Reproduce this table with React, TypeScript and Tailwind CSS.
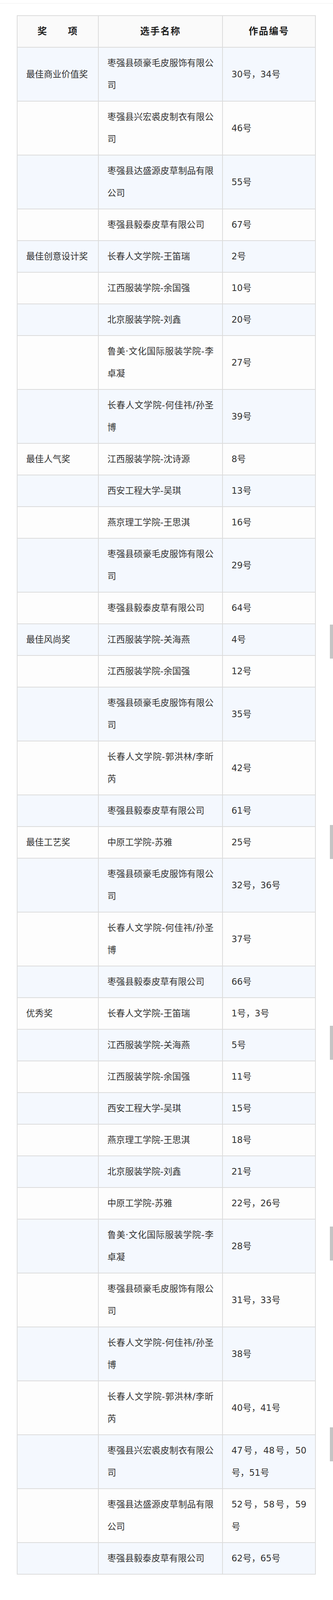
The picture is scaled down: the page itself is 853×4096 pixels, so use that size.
import React from 'react';

type Row = [string, string, string];

const rows: Row[] = [
  ['最佳商业价值奖', '枣强县硕豪毛皮服饰有限公司', '30号，34号'],
  ['', '枣强县兴宏裘皮制衣有限公司', '46号'],
  ['', '枣强县达盛源皮草制品有限公司', '55号'],
  ['', '枣强县毅泰皮草有限公司', '67号'],
  ['最佳创意设计奖', '长春人文学院-王笛瑞', '2号'],
  ['', '江西服装学院-余国强', '10号'],
  ['', '北京服装学院-刘鑫', '20号'],
  ['', '鲁美·文化国际服装学院-李卓凝', '27号'],
  ['', '长春人文学院-何佳祎/孙圣博', '39号'],
  ['最佳人气奖', '江西服装学院-沈诗源', '8号'],
  ['', '西安工程大学-吴琪', '13号'],
  ['', '燕京理工学院-王思淇', '16号'],
  ['', '枣强县硕豪毛皮服饰有限公司', '29号'],
  ['', '枣强县毅泰皮草有限公司', '64号'],
  ['最佳风尚奖', '江西服装学院-关海燕', '4号'],
  ['', '江西服装学院-余国强', '12号'],
  ['', '枣强县硕豪毛皮服饰有限公司', '35号'],
  ['', '长春人文学院-郭洪林/李昕芮', '42号'],
  ['', '枣强县毅泰皮草有限公司', '61号'],
  ['最佳工艺奖', '中原工学院-苏雅', '25号'],
  ['', '枣强县硕豪毛皮服饰有限公司', '32号，36号'],
  ['', '长春人文学院-何佳祎/孙圣博', '37号'],
  ['', '枣强县毅泰皮草有限公司', '66号'],
  ['优秀奖', '长春人文学院-王笛瑞', '1号，3号'],
  ['', '江西服装学院-关海燕', '5号'],
  ['', '江西服装学院-余国强', '11号'],
  ['', '西安工程大学-吴琪', '15号'],
  ['', '燕京理工学院-王思淇', '18号'],
  ['', '北京服装学院-刘鑫', '21号'],
  ['', '中原工学院-苏雅', '22号，26号'],
  ['', '鲁美·文化国际服装学院-李卓凝', '28号'],
  ['', '枣强县硕豪毛皮服饰有限公司', '31号，33号'],
  ['', '长春人文学院-何佳祎/孙圣博', '38号'],
  ['', '长春人文学院-郭洪林/李昕芮', '40号，41号'],
  ['', '枣强县兴宏裘皮制衣有限公司', '47号，48号，50号，51号'],
  ['', '枣强县达盛源皮草制品有限公司', '52号，58号，59号'],
  ['', '枣强县毅泰皮草有限公司', '62号，65号'],
];

// scrollbar thumbs left over in the long screenshot
const thumbs = [1599, 2112, 2626, 3140, 3654];

const cell = 'flex items-center px-[22px] py-[11px]';

export default function App() {
  return (
    <div
      className="relative min-h-[4096px] bg-white"
      style={{ fontFamily: '"DejaVu Sans", "Noto Sans CJK SC", sans-serif' }}
    >
      <div className="h-[9px] border-b border-[#efefef]" />

      <div className="ml-[43px] mt-[30px] w-[766px] border-2 border-[#dcdcdc]">
        <div className="grid grid-cols-[208px_318px_236px] border-b-2 border-[#dcdcdc] bg-[#fafafa] text-[24px] font-bold leading-[57px] tracking-[2px] text-[#1f1f1f]">
          <div className={`${cell} justify-center border-r-2 border-[#dcdcdc]`}>奖　　项</div>
          <div className={`${cell} justify-center border-r-2 border-[#dcdcdc]`}>选手名称</div>
          <div className={`${cell} justify-center`}>作品编号</div>
        </div>

        {rows.map(([award, name, num], i) => (
          <div
            key={i}
            className={`grid grid-cols-[208px_318px_236px] text-[22.6px] leading-[57px] text-[#333333] ${
              i % 2 === 0 ? 'bg-[#f4f8fe]' : 'bg-[#fdfdfd]'
            } ${i < rows.length - 1 ? 'border-b-2 border-[#dcdcdc]' : ''}`}
          >
            <div className={`${cell} border-r-2 border-[#dcdcdc]`}>
              <p className="w-full">{award}</p>
            </div>
            <div className={`${cell} border-r-2 border-[#dcdcdc]`}>
              <p className="w-full text-justify">{name}</p>
            </div>
            <div className={cell}>
              <p className="w-full text-justify">{num}</p>
            </div>
          </div>
        ))}
      </div>

      {thumbs.map((top) => (
        <div
          key={top}
          className="absolute right-0 h-[87px] w-[8px] bg-[#c4c4c4]"
          style={{ top }}
        />
      ))}
    </div>
  );
}
